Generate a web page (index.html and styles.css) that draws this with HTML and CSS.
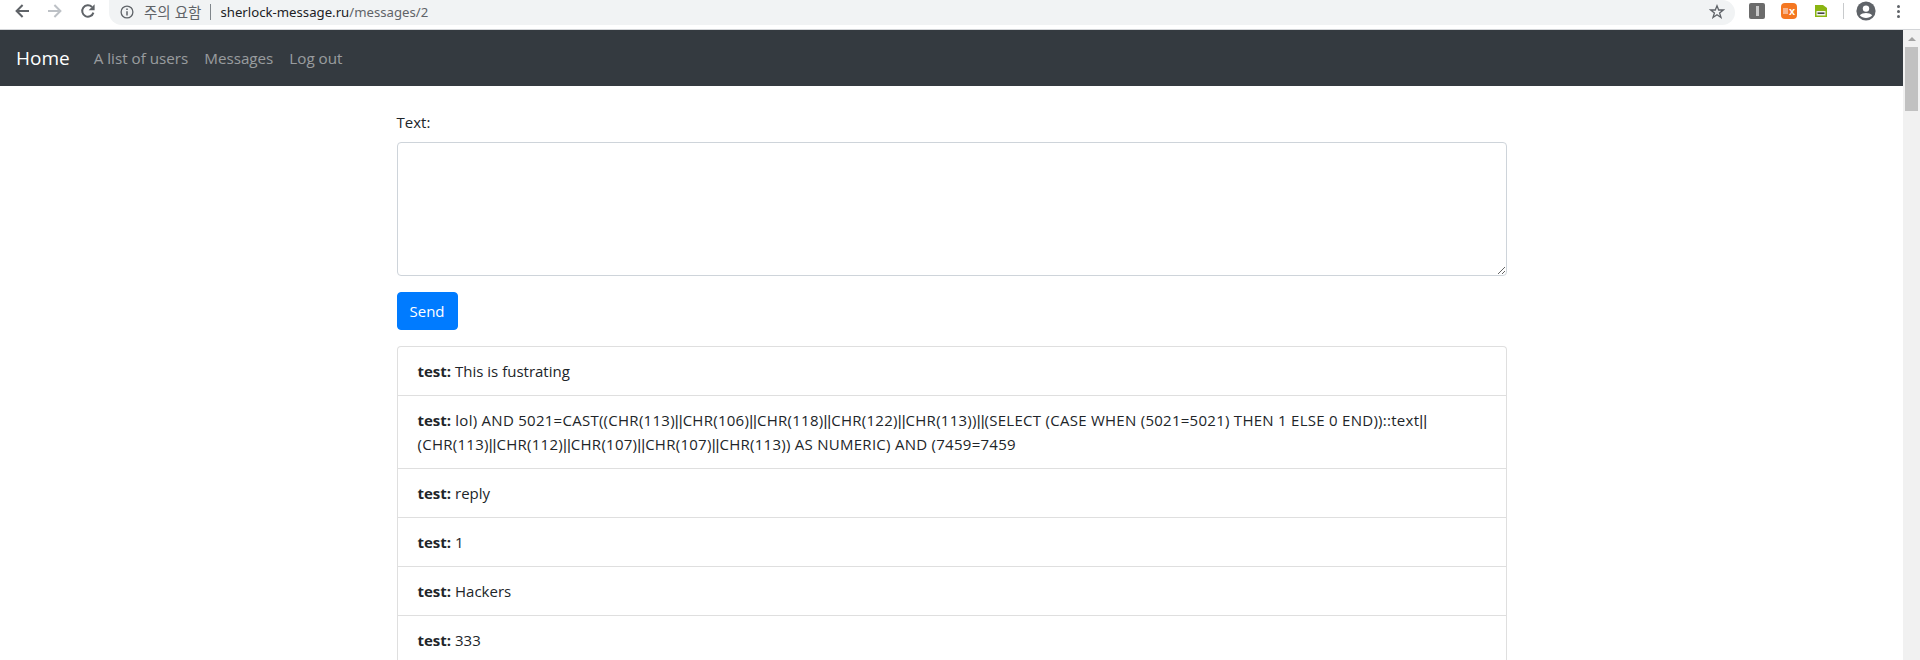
FILE: index.html
```html
<!DOCTYPE html>
<html lang="ko">
<head>
    <meta charset="UTF-8">
    <title>Messages</title>
    <link rel="stylesheet" href="styles.css">
</head>
<body>
    <div class="toolbar">
        <svg class="tool-icon" viewBox="0 0 16 16"><path d="M15 8H3M8.6 2 2.6 8l6 6" fill="none" stroke="#5f6368" stroke-width="2"/></svg>
        <svg class="tool-icon" viewBox="0 0 16 16"><path d="M1 8h12M7.4 2l6 6-6 6" fill="none" stroke="#bdc1c6" stroke-width="2"/></svg>
        <svg class="tool-icon" viewBox="0 0 16 16"><path d="M13.4 9.6A5.7 5.7 0 1 1 12 4" fill="none" stroke="#5f6368" stroke-width="2"/><path d="M14.6 1.2v6H8.6z" fill="#5f6368"/></svg>
        <div class="omnibox">
            <svg class="info-icon" viewBox="0 0 14 14"><circle cx="7" cy="7" r="5.9" fill="none" stroke="#5f6368" stroke-width="1.3"/><path d="M7 6.2v4.2M7 3.4v1.6" stroke="#5f6368" stroke-width="1.5"/></svg>
            <span class="warn-text">주의 요함</span>
            <span class="omni-sep"></span>
            <span class="url">sherlock-message.ru<span class="url-path">/messages/2</span></span>
            <svg class="star-icon" viewBox="0 0 16 16"><path d="M8 1.8 9.7 6h4.6l-3.7 2.9 1.4 4.6L8 10.8l-4 2.7 1.4-4.6L1.7 6h4.6z" fill="none" stroke="#5f6368" stroke-width="1.3"/></svg>
        </div>
        <div class="extensions">
            <span class="ext ext-grey"><span class="ext-bar"></span></span>
            <span class="ext ext-orange"><span class="ext-box"></span>x</span>
            <svg class="ext-sheet" viewBox="0 0 12 12"><path d="M0 0h8l4 3v9H0z" fill="#8ab512"/><path d="M1.5 6h9v4.5h-9z" fill="#f4f4f4"/><path d="M2.5 8.2h7" stroke="#444" stroke-width="1.6"/></svg>
            <span class="toolbar-sep"></span>
            <svg class="avatar" viewBox="0 0 20 20"><circle cx="10" cy="10" r="9.6" fill="#5f6368"/><circle cx="10" cy="7.6" r="3.2" fill="#fff"/><path d="M3.8 14.2c3-2.8 9.4-2.8 12.4 0-3 3.6-9.4 3.6-12.4 0z" fill="#fff"/></svg>
            <span class="dots"><i></i><i></i><i></i></span>
        </div>
    </div>

    <div class="viewport">
        <div class="page">
            <nav class="navbar">
                <a class="brand" href="#">Home</a>
                <a class="nav-link" href="#">A list of users</a>
                <a class="nav-link" href="#">Messages</a>
                <a class="nav-link" href="#">Log out</a>
            </nav>

            <main class="container">
                <form class="message-form">
                    <label for="text">Text:</label>
                    <textarea id="text" class="text-input"></textarea>
                    <button type="button" class="send-button">Send</button>
                </form>

                <ul class="message-list">
                    <li><b>test:</b> This is fustrating</li>
                    <li class="long-message"><b>test:</b> lol) AND 5021=CAST((CHR(113)<span class="pipes">||</span>CHR(106)<span class="pipes">||</span>CHR(118)<span class="pipes">||</span>CHR(122)<span class="pipes">||</span>CHR(113))<span class="pipes">||</span>(SELECT (CASE WHEN (5021=5021) THEN 1 ELSE 0 END))::text<span class="pipes">||</span>(CHR(113)<span class="pipes">||</span>CHR(112)<span class="pipes">||</span>CHR(107)<span class="pipes">||</span>CHR(107)<span class="pipes">||</span>CHR(113)) AS NUMERIC) AND (7459=7459</li>
                    <li><b>test:</b> reply</li>
                    <li><b>test:</b> 1</li>
                    <li><b>test:</b> Hackers</li>
                    <li><b>test:</b> 333</li>
                </ul>
            </main>
        </div>

        <div class="scrollbar">
            <span class="scroll-up"></span>
            <span class="scroll-thumb"></span>
        </div>
    </div>
</body>
</html>
```

FILE: styles.css
```css
* {
    box-sizing: border-box;
}

html, body {
    height: 100%;
}

body {
    margin: 0;
    display: flex;
    flex-direction: column;
    overflow: hidden;
    font-family: "Open Sans", "Noto Sans", sans-serif;
    font-size: 15px;
    line-height: 24px;
    color: #212529;
    background-color: #fff;
}

/* browser chrome */
.toolbar {
    flex: none;
    height: 30px;
    display: flex;
    align-items: flex-start;
    padding-left: 14px;
    background-color: #fff;
    border-bottom: 1px solid #d3d5d8;
}

.tool-icon {
    width: 16px;
    height: 16px;
    margin: 3px 17px 0 0;
}

.tool-icon:nth-child(3) {
    margin-right: 0;
}

.omnibox {
    width: 1626px;
    height: 25px;
    margin-left: 13px;
    padding: 0 10px 2px 11px;
    display: flex;
    align-items: center;
    background-color: #f1f3f4;
    border-radius: 0 13px 13px 13px;
    font-family: "Noto Sans", sans-serif;
    font-size: 13.2px;
}

.info-icon {
    width: 14px;
    height: 14px;
    flex: none;
}

.warn-text {
    margin-left: 10px;
    color: #5f6368;
    font-family: "Noto Sans CJK KR", sans-serif;
    font-size: 14.5px;
}

.omni-sep {
    width: 1px;
    height: 16px;
    margin: 0 9px 0 9px;
    background-color: #80868b;
}

.url {
    color: #202124;
}

.url-path {
    color: #5f6368;
}

.star-icon {
    width: 16px;
    height: 16px;
    margin-left: auto;
}

.extensions {
    flex: 1;
    display: flex;
    align-items: center;
    height: 22px;
    padding-left: 14px;
}

.ext {
    width: 16px;
    height: 16px;
    border-radius: 2px;
    display: flex;
    align-items: center;
    justify-content: center;
}

.ext-grey {
    background-color: #6b6b6b;
}

.ext-bar {
    width: 3px;
    height: 10px;
    background-color: #c9c9c9;
}

.ext-orange {
    margin-left: 16px;
    gap: 1px;
    background-color: #f47721;
    border-radius: 4px;
    color: #fff;
    font: bold 11px/16px "Liberation Sans", sans-serif;
}

.ext-box {
    width: 5px;
    height: 6px;
    background-color: #f9b48a;
}

.ext-sheet {
    width: 12px;
    height: 12px;
    margin-left: 18px;
}

.toolbar-sep {
    width: 1px;
    height: 16px;
    margin-left: 16px;
    background-color: #c8cacc;
}

.avatar {
    width: 20px;
    height: 20px;
    margin-left: 12px;
}

.dots {
    display: flex;
    flex-direction: column;
    gap: 2px;
    margin-left: 21px;
}

.dots i {
    width: 3px;
    height: 3px;
    border-radius: 50%;
    background-color: #5f6368;
}

/* page */
.viewport {
    flex: 1;
    min-height: 0;
    display: flex;
}

.page {
    flex: 1;
    min-width: 0;
    overflow: hidden;
}

.navbar {
    height: 56px;
    padding: 0 16px;
    display: flex;
    align-items: center;
    background-color: #343a40;
}

.navbar a {
    text-decoration: none;
}

.brand {
    margin-right: 16px;
    font-size: 19px;
    color: #fff;
}

.nav-link {
    padding: 0 8px;
    font-size: 15.2px;
    color: rgba(255, 255, 255, 0.5);
}

.container {
    width: 1110px;
    margin: 0 auto;
    padding-top: 24px;
}

.message-form label {
    display: block;
    height: 24px;
    margin-bottom: 8px;
}

.text-input {
    display: block;
    width: 100%;
    height: 134px;
    margin-bottom: 16px;
    border: 1px solid #ced4da;
    border-radius: 4px;
    background-color: #fff;
}

.send-button {
    display: block;
    height: 38px;
    padding: 0 12px;
    border: 1px solid #007bff;
    border-radius: 4px;
    background-color: #007bff;
    color: #fff;
    font: inherit;
}

.message-list {
    margin: 16px 0 0;
    padding: 0;
    list-style: none;
    border: 1px solid #dfdfdf;
    border-bottom: none;
    border-radius: 4px 4px 0 0;
}

.message-list li {
    padding: 12px 20px;
    border-bottom: 1px solid #dfdfdf;
}

.message-list b {
    font-weight: 700;
    letter-spacing: 0;
}

/* caps and digits run wider in the original font */
.message-list .long-message {
    letter-spacing: 0.27px;
}

/* the pipes are much narrower in the original font */
.pipes {
    font-family: "Liberation Sans", sans-serif;
    line-height: 1;
    letter-spacing: 0;
}

.scrollbar {
    flex: none;
    width: 17px;
    display: flex;
    flex-direction: column;
    align-items: center;
    background-color: #f1f1f1;
}

.scroll-up {
    width: 0;
    height: 0;
    margin-top: 7px;
    border-left: 4px solid transparent;
    border-right: 4px solid transparent;
    border-bottom: 4px solid #a3a3a3;
}

.scroll-thumb {
    width: 13px;
    height: 64px;
    margin-top: 6px;
    background-color: #c1c1c1;
}
```
